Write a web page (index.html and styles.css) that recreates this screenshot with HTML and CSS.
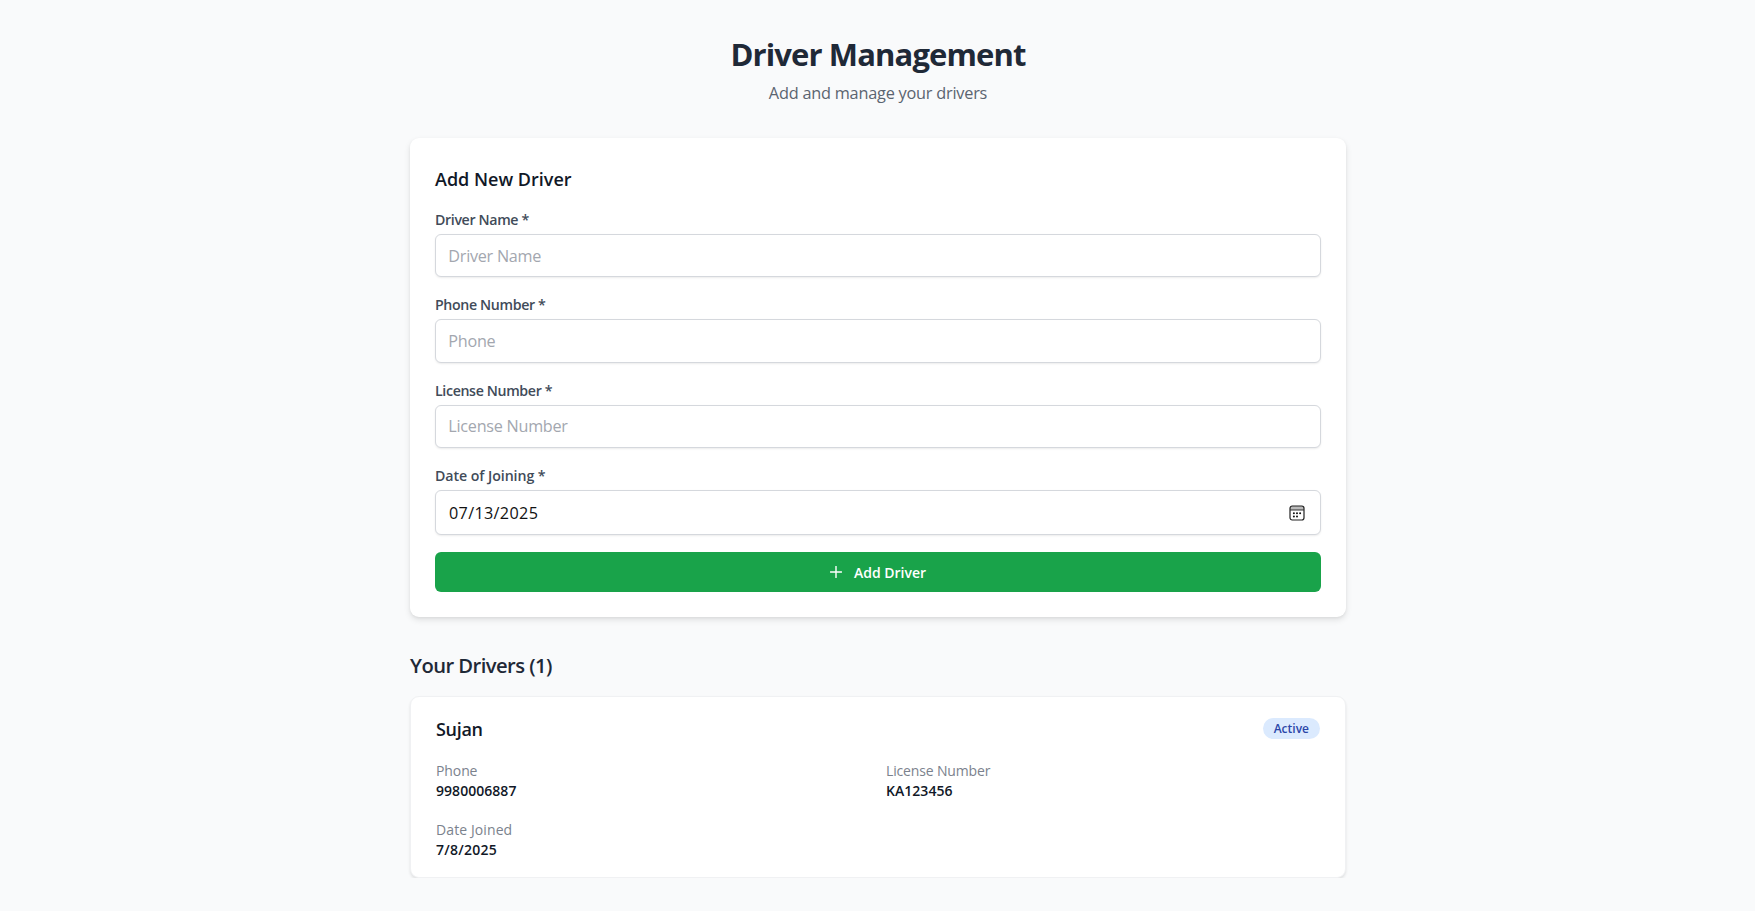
FILE: index.html
```html
<!DOCTYPE html>
<html lang="en">
<head>
<meta charset="utf-8">
<title>Driver Management</title>
<link rel="stylesheet" href="styles.css">
</head>
<body>
<main class="page">
  <header class="page-header">
    <h1 class="title">Driver Management</h1>
    <p class="subtitle">Add and manage your drivers</p>
  </header>

  <form class="card form-card">
    <h2 class="form-title">Add New Driver</h2>
    <div class="field">
      <label class="label" for="name">Driver Name *</label>
      <input class="input" id="name" type="text" placeholder="Driver Name">
    </div>
    <div class="field">
      <label class="label" for="phone">Phone Number *</label>
      <input class="input" id="phone" type="text" placeholder="Phone">
    </div>
    <div class="field">
      <label class="label" for="license">License Number *</label>
      <input class="input" id="license" type="text" placeholder="License Number">
    </div>
    <div class="field">
      <span class="label label-date">Date of Joining *</span>
      <div class="input date-input">
        <span class="date-value">07/13/2025</span>
        <svg class="calendar" viewBox="0 0 16 16" aria-hidden="true">
          <path d="M1 3.2Q1 1 3.2 1H12.8Q15 1 15 3.2V5H1Z" fill="#bbb"/>
          <rect x="1" y="1" width="14" height="14" rx="2.2" fill="none" stroke="#222" stroke-width="1.2"/>
          <path d="M1 5H15" stroke="#333" stroke-width="1"/>
          <g fill="#111"><circle cx="4.9" cy="8.3" r="1"/><circle cx="8" cy="8.3" r="1"/><circle cx="11.1" cy="8.3" r="1"/><circle cx="4.9" cy="11.4" r="1"/><circle cx="8" cy="11.4" r="1"/></g>
        </svg>
      </div>
    </div>
    <button class="submit" type="button">
      <svg class="plus" viewBox="0 0 12 12" aria-hidden="true"><path d="M6 .4V11.6M.4 6H11.6" fill="none" stroke="#fff" stroke-width="1.4" stroke-linecap="round"/></svg>
      <span class="submit-text">Add Driver</span>
    </button>
  </form>

  <h2 class="list-title">Your Drivers (1)</h2>
  <article class="card driver-card">
    <div class="driver-head">
      <h3 class="driver-name">Sujan</h3>
      <span class="badge">Active</span>
    </div>
    <dl class="details">
      <div><dt class="key">Phone</dt><dd class="value">9980006887</dd></div>
      <div><dt class="key key-license">License Number</dt><dd class="value">KA123456</dd></div>
      <div><dt class="key key-date">Date Joined</dt><dd class="value value-date">7/8/2025</dd></div>
    </dl>
  </article>
</main>
</body>
</html>
```
FILE: styles.css
```css
* { box-sizing: border-box; }
body { margin: 0; background: #f9fafb; color: #111827; font-family: "Open Sans", "Noto Sans", sans-serif; }
h1, h2, h3, p, dl, dd { margin: 0; }
.page { width: 937px; margin: 0 auto; padding: 34px 0 0 1px; }
.page-header { height: 104.4px; text-align: center; }
.title { font-size: 31px; line-height: 40px; font-weight: 700; color: #1f2937; letter-spacing: -.88px; }
.subtitle { margin-top: 7.5px; font-size: 16.3px; line-height: 23px; color: #5b6470; letter-spacing: -.22px; }
.card { background: #fff; border-radius: 9px; }
.form-card { height: 479px; padding: 26.6px 25px 0; box-shadow: 0 3px 6px rgba(0,0,0,.1), 0 1px 3px rgba(0,0,0,.05); }
.form-title { font-size: 18px; line-height: 28px; font-weight: 600; margin-bottom: 16px; }
.field { height: 85.3px; display: flex; flex-direction: column; }
.label { font-size: 14.2px; line-height: 21px; font-weight: 600; color: #414b59; margin-bottom: 4px; letter-spacing: -.36px; }
.label-date { letter-spacing: -.07px; }
.input { width: 100%; height: 43.5px; flex-shrink: 0; padding: 0 12.3px; border: 1px solid #d5d8dd; border-radius: 6px; background: #fff; box-shadow: 0 1px 2px rgba(0,0,0,.08); font: 400 16.2px "Open Sans", sans-serif; color: #111; outline: 0; }
.input::placeholder { color: #a3a7af; opacity: 1; letter-spacing: -.26px; }
.date-input { height: 45px; display: flex; align-items: center; justify-content: space-between; padding: 1px 15.5px 0 13px; }
.date-value { letter-spacing: .33px; }
.calendar { width: 16px; height: 16px; }
.submit { width: 100%; height: 40px; margin-top: 2px; border: 0; border-radius: 6px; background: #19a34a; color: #fff; display: flex; align-items: center; justify-content: center; gap: 12px; font: 600 14px "Open Sans", sans-serif; }
.plus { width: 12px; height: 12px; }
.list-title { margin-top: 33.6px; height: 45px; font-size: 20.2px; line-height: 29px; font-weight: 600; color: #1f2937; letter-spacing: -.55px; }
.driver-card { height: 182px; padding: 17px 25px 0; border: 1px solid #f0f1f3; box-shadow: 0 2px 3px rgba(0,0,0,.1); }
.driver-head { display: flex; justify-content: space-between; align-items: center; height: 30px; }
.driver-name { font-size: 18px; line-height: 30px; font-weight: 600; letter-spacing: -.3px; }
.badge { height: 21px; padding: 0 11px; border-radius: 11px; background: #dbeafe; color: #2b46a8; font-size: 12px; line-height: 21px; font-weight: 600; }
.details { margin-top: 17px; display: grid; grid-template-columns: 1fr 1fr; column-gap: 16px; row-gap: 17.6px; }
.key { font-size: 14px; line-height: 20.5px; color: #7b828d; letter-spacing: -.1px; }
.key-license { letter-spacing: -.15px; }
.key-date { letter-spacing: .1px; }
.value { font-size: 14px; line-height: 20.5px; font-weight: 600; color: #111827; letter-spacing: .04px; }
.value-date { letter-spacing: .25px; }
```
